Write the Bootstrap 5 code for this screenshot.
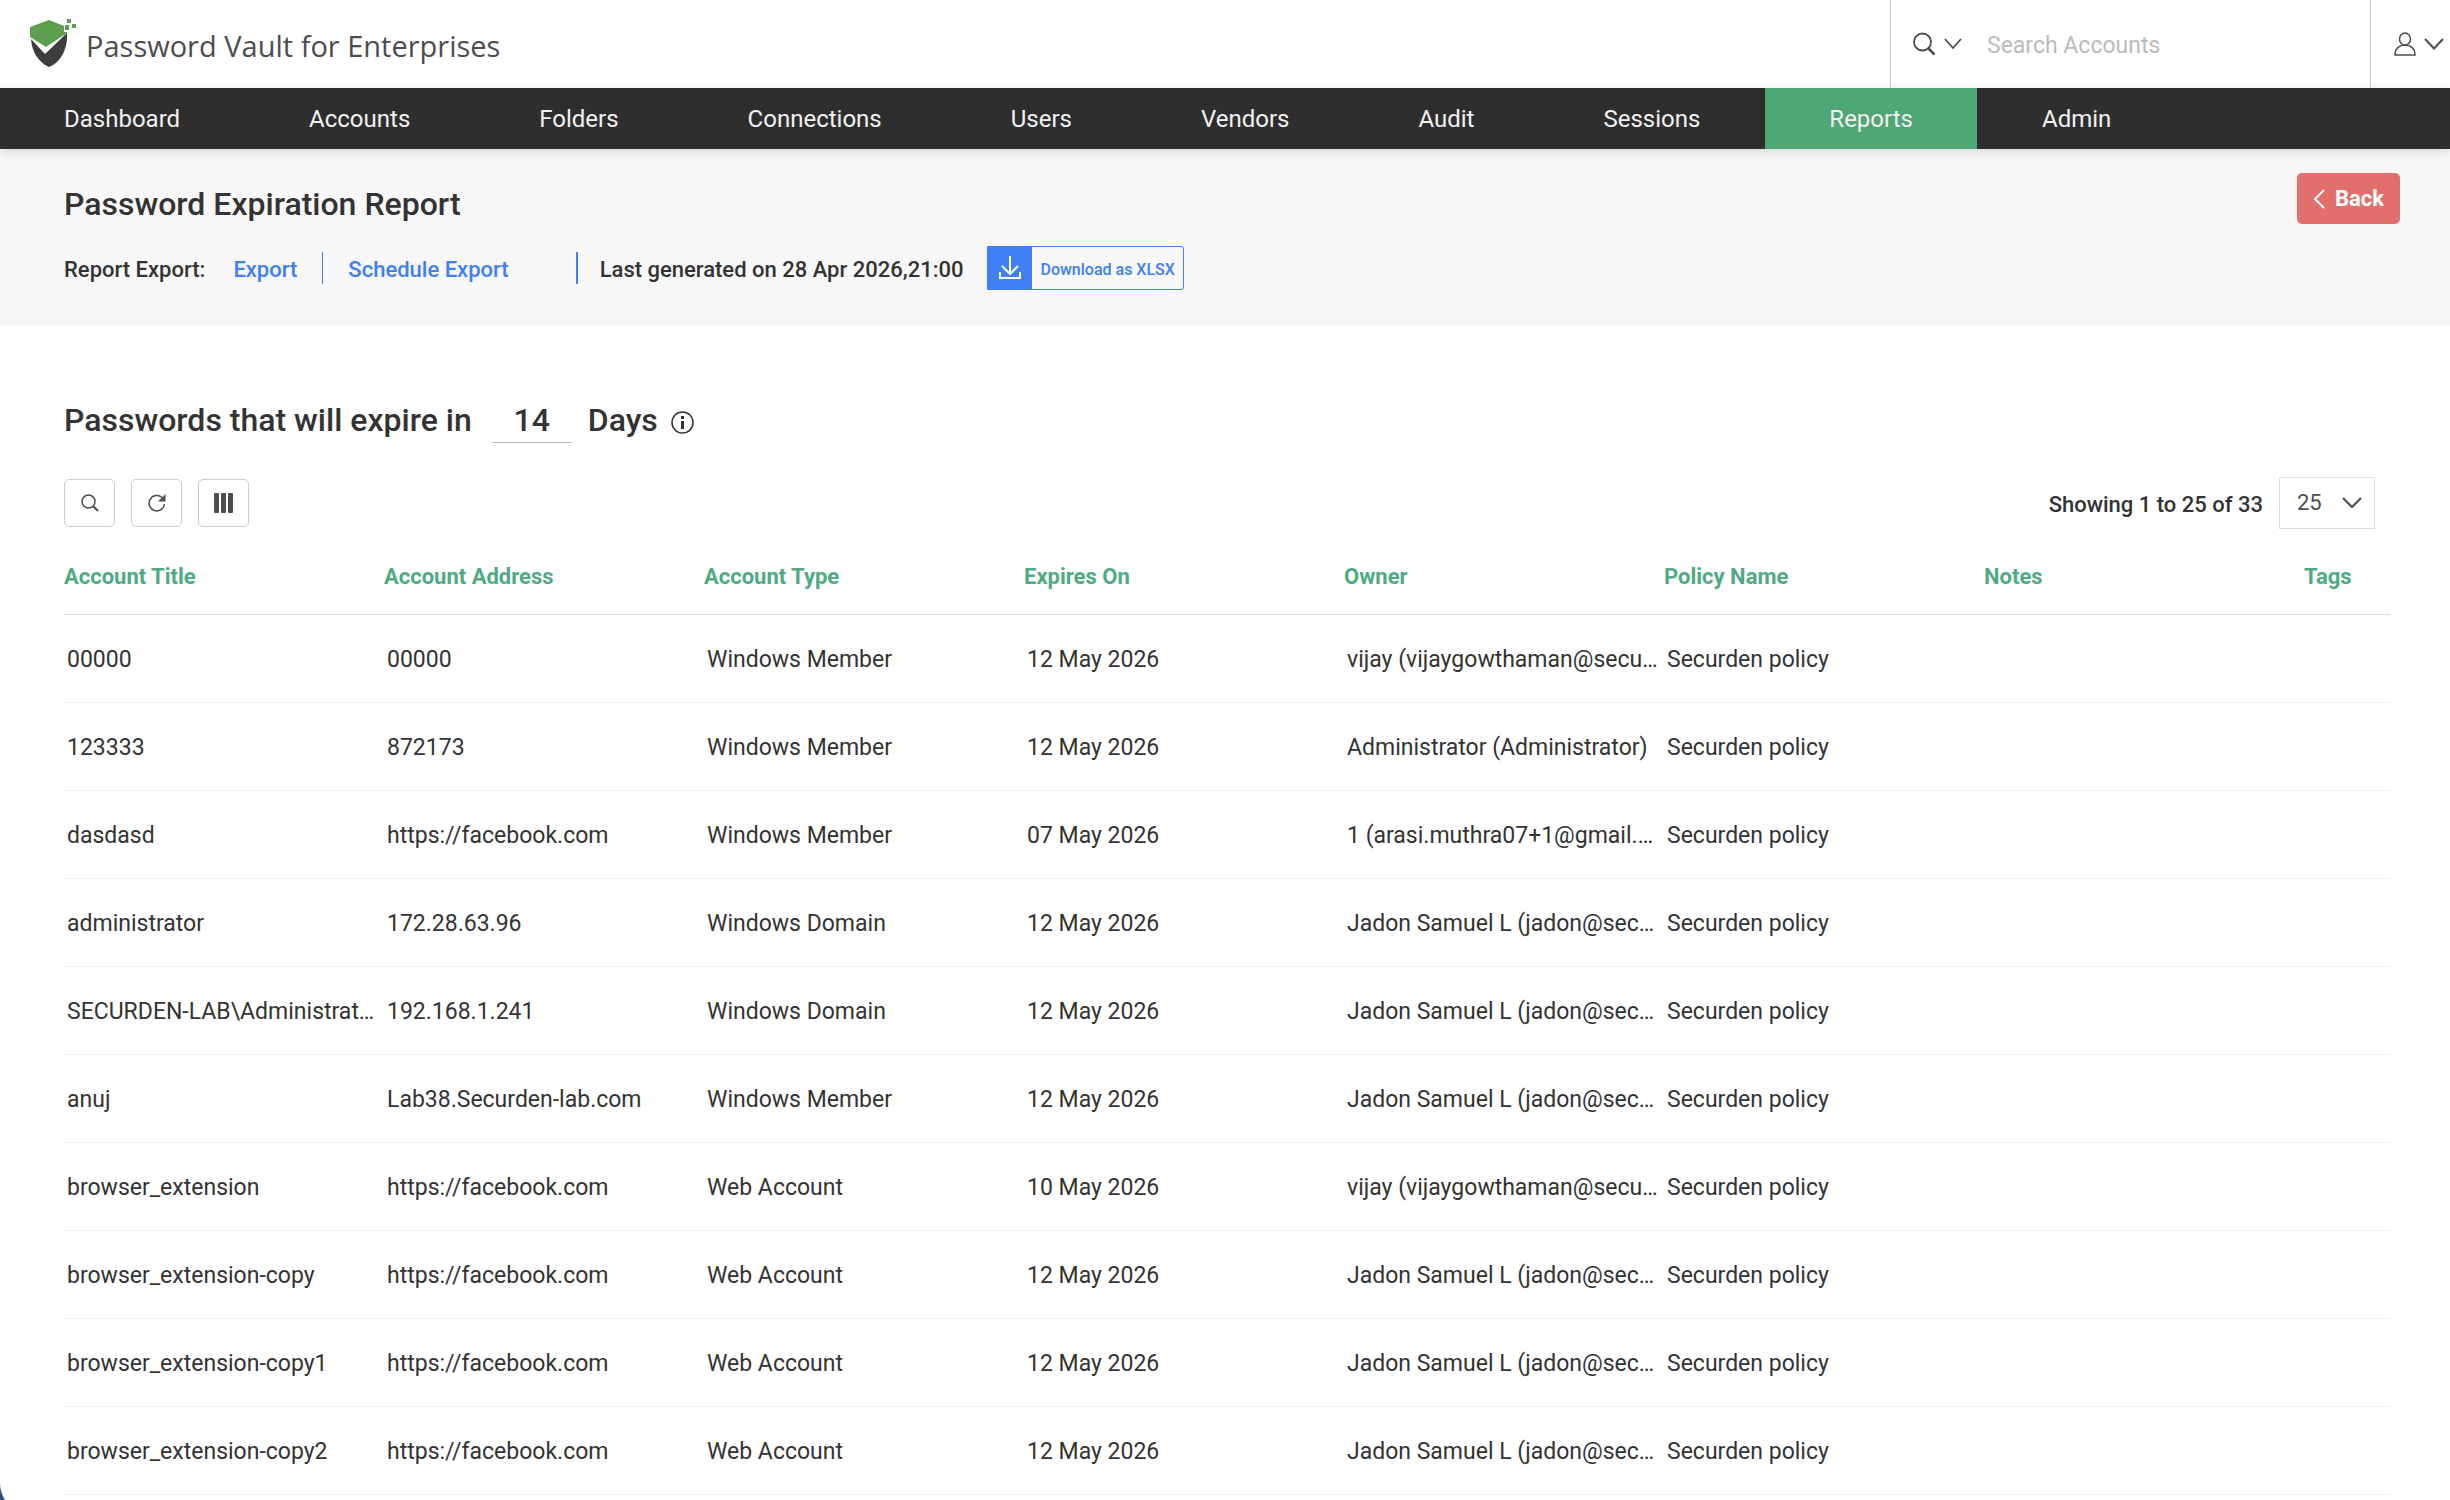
<!DOCTYPE html>
<html lang="en">
<head>
<meta charset="utf-8">
<meta name="viewport" content="width=device-width, initial-scale=1">
<title>Password Expiration Report</title>
<link href="https://cdn.jsdelivr.net/npm/bootstrap@5.3.0/dist/css/bootstrap.min.css" rel="stylesheet">
<style>
body{font-family:Roboto,"Liberation Sans",sans-serif;font-size:22px;line-height:32px;color:#333;background:#fff;overflow:hidden}
a{text-decoration:none}
svg{display:block;flex:none;fill:none;stroke:currentColor}
.top-bar{height:88px;color:#4d4d4d}
.brand-link{font-family:"Open Sans",sans-serif;font-size:29px;color:#4d4d4d;padding-left:30px;gap:10px}
.brand-link span{padding-top:3px}
.search-box{width:481px;border-left:1px solid #ccc;border-right:1px solid #ccc;padding-left:22px}
.search-box input{font-size:23px;color:#4d4d4d;margin-left:25px;outline:0}
.search-box input::placeholder{color:#bbb;opacity:1}
.icon-btn{border:0;background:none;padding:0;color:#4d4d4d}
.user-btn{width:79px;padding-left:23px;gap:8px}
.main-nav{background:#2e2e2e;box-shadow:0 2px 10px rgba(0,0,0,.14);position:relative;gap:1px}
.main-nav .nav-link{color:#f2f2f2;font-size:24px;line-height:29px;padding:17px 64px 15px;border-radius:0}
.main-nav .nav-link.active{background:#4fa775;color:#f2f2f2}
.report-head{background:#f7f7f7;height:176px;padding:35px 50px 0 64px}
h1,h2{font-size:32px;line-height:40px;font-weight:500;margin:0}
.export-row{margin-top:22px;height:44px;font-weight:500}
.export-row a,.export-row .row-text,.dl-btn b{padding-top:3px}
.export-row a,.dl-btn{color:#4080f5}
.export-link{margin-left:28px}
.rule-thin{width:1px;height:32px;background:#4080f5;margin:0 25px}
.rule-thick{width:2px;height:32px;background:#4080f5;margin:0 22px 0 67px}
.dl-btn{border:1px solid #4080f5;border-radius:3px;background:transparent;padding:0;font-size:16px;font-weight:500;height:44px;margin-left:24px}
.dl-icon{width:45px;height:44px;background:#4080f5;color:#fff;margin-left:-1px}
.dl-btn b{font-weight:500;padding-left:8px;padding-right:8px}
.back-btn{background:#e1706c;color:#fff;border-radius:5px;height:51px;width:103px;font-size:22px;font-weight:700;padding:0;margin-top:-11px;border:0}
.back-btn:hover{background:#d6605c;color:#fff}
.back-btn svg{margin-right:10px}
.content{padding:72px 60px 0 64px}
.days-input{width:80px;border:0;border-bottom:1px solid #bbb;text-align:center;font-weight:500;color:#333;padding:0;height:46px;margin:0 16px 0 20px;background:none;outline:0}
.info-icon{margin:4px 0 0 13px}
.tool-btn{width:51px;height:48px;border:1px solid #ccc;border-radius:5px;background:#fff;color:#4d4d4d;padding:0}
.tool-row{margin-top:34px}
.showing{font-weight:500;margin-right:16px;padding-top:3px}
.page-size{width:96px;height:52px;border:1px solid #ddd;margin-right:15px}
.page-size select{appearance:none;border:0;background:none;color:#4d4d4d;width:100%;height:100%;padding:0 0 1px 17px;font-size:22px;grid-area:1/1}
.page-size svg{grid-area:1/1;justify-self:end;align-self:center;margin-right:12px;pointer-events:none;color:#4d4d4d}
.report-table{table-layout:fixed;width:100%;margin:0;color:#333;--bs-table-bg:transparent;--bs-table-color:#333}
.report-table col{width:320px}
.report-table col:last-child{width:auto}
.report-table th{color:#50ab82;font-weight:700;height:85px;padding:11px 0 0;vertical-align:middle;border-bottom:1px solid #ddd;line-height:32px}
.report-table td{height:88px;padding:3px 2px 0 3px;vertical-align:middle;border-bottom:1px solid #eee;font-size:23px;overflow:hidden;text-overflow:ellipsis;white-space:nowrap}
.corner{position:fixed;left:0;bottom:0;fill:#2f4f7f;stroke:none}
</style>
<script src="https://cdn.jsdelivr.net/npm/bootstrap@5.3.0/dist/js/bootstrap.bundle.min.js"></script>
</head>
<body>
<header class="top-bar d-flex align-items-stretch">
  <a href="#" class="brand-link d-flex align-items-center me-auto">
    <svg width="46" height="50" viewBox="0 0 46 50"><g stroke="none"><path fill="#5d9e4f" d="M0 8 19 1l15 6v6h3v1L16 28 0 18z"/><path fill="#3d3d3d" d="M1 20 15 35 37 14c1 14-5 29-18 34C8 43 2 33 1 20z"/><path fill="#5d9e4f" d="M35 6h4v5h-4zM37 0h4v4h-4zM42 5h4v4h-4z"/></g></svg>
    <span>Password Vault for Enterprises</span>
  </a>
  <div class="search-box d-flex align-items-center">
    <button class="icon-btn d-flex align-items-center gap-2" type="button" aria-label="Search scope">
      <svg width="23" height="24" viewBox="0 0 23 24" stroke-width="1.800"><circle cx="9.500" cy="10" r="8.500"/><path stroke-width="2.500" d="m15.500 16.500 6 6"/></svg>
      <svg width="18" height="12" viewBox="0 0 18 12" stroke-width="1.800"><path d="m1 1 8 9 8-9"/></svg>
    </button>
    <input type="text" class="border-0 bg-transparent px-0 pb-0 pt-1 flex-fill" placeholder="Search Accounts" aria-label="Search Accounts">
  </div>
  <button class="icon-btn user-btn d-flex align-items-center" type="button" aria-label="User menu">
    <svg width="22" height="24" viewBox="0 0 22 24" stroke-width="1.500"><ellipse cx="11" cy="7" rx="5.500" ry="6"/><path d="M1 23v-1c0-5 4-9 10-9s10 4 10 9v1z"/></svg>
    <svg width="20" height="12" viewBox="0 0 20 12" stroke-width="2"><path d="m1 1 9 9.500L19 1"/></svg>
  </button>
</header>
<nav class="main-nav nav flex-nowrap">
  <a class="nav-link" href="#">Dashboard</a>
  <a class="nav-link" href="#">Accounts</a>
  <a class="nav-link" href="#">Folders</a>
  <a class="nav-link" href="#">Connections</a>
  <a class="nav-link" href="#">Users</a>
  <a class="nav-link" href="#">Vendors</a>
  <a class="nav-link" href="#">Audit</a>
  <a class="nav-link" href="#">Sessions</a>
  <a class="nav-link active" href="#" aria-current="page">Reports</a>
  <a class="nav-link" href="#">Admin</a>
</nav>
<section class="report-head">
  <div class="d-flex justify-content-between align-items-start">
    <div>
      <h1>Password Expiration Report</h1>
      <div class="export-row d-flex align-items-center">
        <span class="row-text">Report Export:</span>
        <a href="#" class="export-link">Export</a>
        <span class="rule-thin"></span>
        <a href="#">Schedule Export</a>
        <span class="rule-thick"></span>
        <span class="row-text">Last generated on 28 Apr 2026,21:00</span>
        <button type="button" class="dl-btn d-flex align-items-center"><span class="dl-icon d-flex align-items-center justify-content-center"><svg width="22" height="24" viewBox="0 0 22 24" stroke-width="2"><path d="M11 0v17M3 10l8 8 8-8M1 16v6h20v-6"/></svg></span><b>Download as XLSX</b></button>
      </div>
    </div>
    <button type="button" class="btn back-btn d-flex align-items-center justify-content-center"><svg width="12" height="20" viewBox="0 0 12 20" stroke-width="2"><path d="m11 1-9 9 9 9"/></svg><span>Back</span></button>
  </div>
</section>
<main class="content">
  <h2 class="d-flex align-items-center">
    <label for="days">Passwords that will expire in</label>
    <input id="days" class="days-input" type="text" value="14">
    <span>Days</span>
    <svg class="info-icon" width="23" height="23" viewBox="0 0 23 23" stroke-width="1.500"><circle cx="11.500" cy="11.500" r="10.500"/><path stroke-width="3" d="M11.500 10v8M11.500 5v3"/></svg>
  </h2>
  <div class="tool-row d-flex align-items-center">
    <div class="d-flex gap-3">
      <button class="tool-btn d-flex align-items-center justify-content-center" type="button" aria-label="Search"><svg width="18" height="18" viewBox="0 0 18 18" stroke-width="1.500"><circle cx="7.500" cy="7.500" r="6.500"/><path stroke-width="2" d="m12 12 5 5"/></svg></button>
      <button class="tool-btn d-flex align-items-center justify-content-center" type="button" aria-label="Refresh"><svg width="18" height="18" viewBox="0 0 18 18" stroke-width="1.500"><path d="M16.500 10A7.700 7.700 0 1 1 14 3.500"/><path fill="currentColor" stroke="none" d="M17.500 0v7.500H10z"/></svg></button>
      <button class="tool-btn d-flex align-items-center justify-content-center" type="button" aria-label="Columns"><svg width="20" height="20" viewBox="0 0 20 20"><g stroke="none" fill="#4d4d4d"><rect width="5" height="20" rx="1"/><rect x="7" width="5" height="20" rx="1"/><rect x="14" width="5" height="20" rx="1"/></g></svg></button>
    </div>
    <label class="showing ms-auto" for="size">Showing 1 to 25 of 33</label>
    <div class="page-size d-grid"><select id="size"><option>25</option><option>50</option><option>100</option></select><svg width="20" height="12" viewBox="0 0 20 12" stroke-width="2"><path d="m1 1 9 9 9-9"/></svg></div>
  </div>
  <table class="table report-table">
    <colgroup><col><col><col><col><col><col><col><col></colgroup>
    <thead><tr><th>Account Title</th><th>Account Address</th><th>Account Type</th><th>Expires On</th><th>Owner</th><th>Policy Name</th><th>Notes</th><th>Tags</th></tr></thead>
    <tbody>
      <tr><td>00000</td><td>00000</td><td>Windows Member</td><td>12 May 2026</td><td>vijay (vijaygowthaman@securden.com)</td><td>Securden policy</td><td></td><td></td></tr>
      <tr><td>123333</td><td>872173</td><td>Windows Member</td><td>12 May 2026</td><td>Administrator (Administrator)</td><td>Securden policy</td><td></td><td></td></tr>
      <tr><td>dasdasd</td><td>https://facebook.com</td><td>Windows Member</td><td>07 May 2026</td><td>1 (arasi.muthra07+1@gmail.com)</td><td>Securden policy</td><td></td><td></td></tr>
      <tr><td>administrator</td><td>172.28.63.96</td><td>Windows Domain</td><td>12 May 2026</td><td>Jadon Samuel L (jadon@securden.com)</td><td>Securden policy</td><td></td><td></td></tr>
      <tr><td>SECURDEN-LAB\Administrators</td><td>192.168.1.241</td><td>Windows Domain</td><td>12 May 2026</td><td>Jadon Samuel L (jadon@securden.com)</td><td>Securden policy</td><td></td><td></td></tr>
      <tr><td>anuj</td><td>Lab38.Securden-lab.com</td><td>Windows Member</td><td>12 May 2026</td><td>Jadon Samuel L (jadon@securden.com)</td><td>Securden policy</td><td></td><td></td></tr>
      <tr><td>browser_extension</td><td>https://facebook.com</td><td>Web Account</td><td>10 May 2026</td><td>vijay (vijaygowthaman@securden.com)</td><td>Securden policy</td><td></td><td></td></tr>
      <tr><td>browser_extension-copy</td><td>https://facebook.com</td><td>Web Account</td><td>12 May 2026</td><td>Jadon Samuel L (jadon@securden.com)</td><td>Securden policy</td><td></td><td></td></tr>
      <tr><td>browser_extension-copy1</td><td>https://facebook.com</td><td>Web Account</td><td>12 May 2026</td><td>Jadon Samuel L (jadon@securden.com)</td><td>Securden policy</td><td></td><td></td></tr>
      <tr><td>browser_extension-copy2</td><td>https://facebook.com</td><td>Web Account</td><td>12 May 2026</td><td>Jadon Samuel L (jadon@securden.com)</td><td>Securden policy</td><td></td><td></td></tr>
    </tbody>
  </table>
</main>
<svg class="corner" width="5" height="17" viewBox="0 0 5 17" aria-hidden="true"><path d="M0 0c0 7 2 12 5 17H0z"/></svg>
</body>
</html>
